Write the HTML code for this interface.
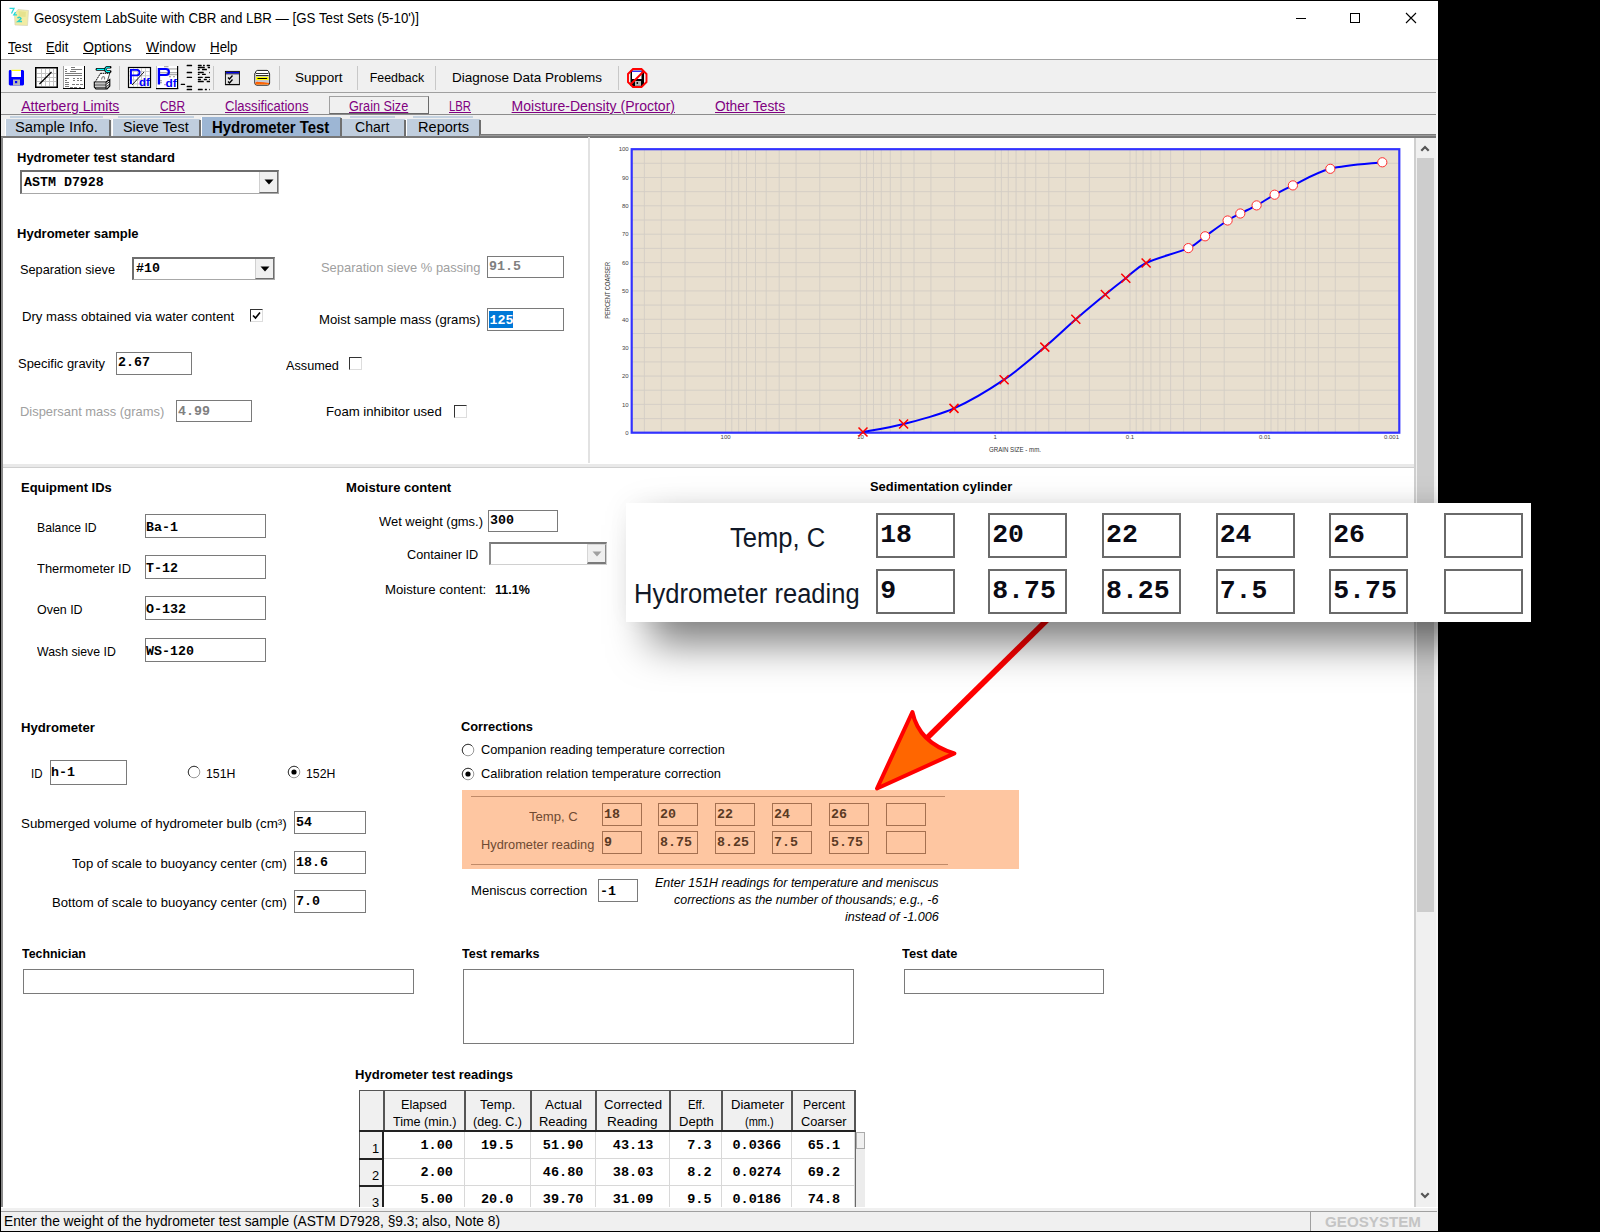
<!DOCTYPE html><html><head><meta charset="utf-8"><style>
html,body{margin:0;padding:0;}
body{width:1600px;height:1232px;background:#000;position:relative;overflow:hidden;font-family:"Liberation Sans", sans-serif;color:#000;}
.t{position:absolute;white-space:nowrap;}
.r{position:absolute;}
</style></head><body>
<div class="r" style="left:1px;top:1px;width:1437px;height:1231px;background:#fff;"></div>
<svg class="r" style="left:0;top:0" width="34" height="34" viewBox="0 0 34 34">
<path d="M18 9.5 L28.5 10.5 L27.5 25.5 L15 25 L14.5 14 Z" fill="#f1eca4" stroke="#d6d2b8" stroke-width="0.7"/>
<path d="M18.5 11 L26 12 L25.5 17 L19 16.5 Z" fill="#e0dc80" opacity="0.6"/>
<path d="M9.5 8.3 H14 L11.5 13.5" fill="none" stroke="#30d8d8" stroke-width="1.3"/>
<path d="M15.5 12 L13.8 14.8 H17" fill="none" stroke="#20dada" stroke-width="1.3"/>
<path d="M17.5 18 Q20 16.5 21 18.5 Q20 20 18 21.5 H22" fill="none" stroke="#30d0c8" stroke-width="1.5"/>
</svg>
<div class="t" style="left:33.75px;top:10.95px;font-size:14px;line-height:14px;transform-origin:0 11.85px;transform:scale(0.9494,1.0000);">Geosystem LabSuite with CBR and LBR — [GS Test Sets (5-10')]</div>
<div class="r" style="left:1296px;top:18px;width:10px;height:1px;background:#000;"></div>
<div class="r" style="left:1350px;top:13px;width:10px;height:10px;border:1px solid #000;box-sizing:border-box;"></div>
<svg class="r" style="left:1405px;top:12px" width="12" height="12" viewBox="0 0 12 12"><path d="M1 1 L11 11 M11 1 L1 11" stroke="#000" stroke-width="1.1"/></svg>
<div class="t" style="left:8.10px;top:40.82px;font-size:13.8px;line-height:13.8px;transform-origin:0 11.68px;transform:scale(0.9399,1.0000);"><u>T</u>est</div>
<div class="t" style="left:46.25px;top:40.82px;font-size:13.8px;line-height:13.8px;transform-origin:0 11.68px;transform:scale(0.9347,1.0000);"><u>E</u>dit</div>
<div class="t" style="left:83.10px;top:40.82px;font-size:13.8px;line-height:13.8px;transform-origin:0 11.68px;transform:scale(1.0181,1.0000);"><u>O</u>ptions</div>
<div class="t" style="left:146.00px;top:40.82px;font-size:13.8px;line-height:13.8px;transform-origin:0 11.68px;transform:scale(1.0096,1.0000);"><u>W</u>indow</div>
<div class="t" style="left:210.00px;top:40.82px;font-size:13.8px;line-height:13.8px;transform-origin:0 11.68px;transform:scale(0.9697,1.0000);"><u>H</u>elp</div>
<div class="r" style="left:1px;top:59px;width:1437px;height:1px;background:#a0a0a0;"></div>
<div class="r" style="left:1px;top:60px;width:1437px;height:32px;background:#f0f0f0;"></div>
<div class="r" style="left:1px;top:92px;width:1437px;height:1px;background:#a0a0a0;"></div>
<div class="r" style="left:1px;top:93px;width:1437px;height:21px;background:#f0f0f0;"></div>
<div class="r" style="left:1px;top:114px;width:1437px;height:1px;background:#8c8c8c;"></div>
<div class="r" style="left:1px;top:115px;width:1437px;height:22px;background:#f0f0f0;"></div>
<div class="r" style="left:119px;top:66px;width:1px;height:24px;background:#c8c8c8;"></div>
<div class="r" style="left:213px;top:66px;width:1px;height:24px;background:#c8c8c8;"></div>
<div class="r" style="left:279px;top:66px;width:1px;height:24px;background:#c8c8c8;"></div>
<div class="r" style="left:357px;top:66px;width:1px;height:24px;background:#c8c8c8;"></div>
<div class="r" style="left:435px;top:66px;width:1px;height:24px;background:#c8c8c8;"></div>
<div class="r" style="left:618px;top:66px;width:1px;height:24px;background:#c8c8c8;"></div>
<div class="t" style="left:295.30px;top:72.30px;font-size:12.4px;line-height:12.4px;transform-origin:0 10.50px;transform:scale(1.0929,1.0000);">Support</div>
<div class="t" style="left:369.70px;top:72.30px;font-size:12.4px;line-height:12.4px;">Feedback</div>
<div class="t" style="left:451.60px;top:72.30px;font-size:12.4px;line-height:12.4px;transform-origin:0 10.50px;transform:scale(1.0883,1.0000);">Diagnose Data Problems</div>
<div class="t" style="left:21.25px;top:99.05px;font-size:14px;line-height:14px;color:#800080;text-decoration:underline;">Atterberg Limits</div>
<div class="t" style="left:160.00px;top:99.05px;font-size:14px;line-height:14px;color:#800080;transform-origin:0 11.85px;transform:scale(0.8463,1.0000);text-decoration:underline;">CBR</div>
<div class="t" style="left:225.00px;top:99.05px;font-size:14px;line-height:14px;color:#800080;transform-origin:0 11.85px;transform:scale(0.9323,1.0000);text-decoration:underline;">Classifications</div>
<div class="t" style="left:348.75px;top:99.05px;font-size:14px;line-height:14px;color:#800080;transform-origin:0 11.85px;transform:scale(0.9062,1.0000);text-decoration:underline;">Grain Size</div>
<div class="t" style="left:449.00px;top:99.05px;font-size:14px;line-height:14px;color:#800080;transform-origin:0 11.85px;transform:scale(0.8079,1.0000);text-decoration:underline;">LBR</div>
<div class="t" style="left:511.60px;top:99.05px;font-size:14px;line-height:14px;color:#800080;text-decoration:underline;">Moisture-Density (Proctor)</div>
<div class="t" style="left:715.00px;top:99.05px;font-size:14px;line-height:14px;color:#800080;transform-origin:0 11.85px;transform:scale(0.9814,1.0000);text-decoration:underline;">Other Tests</div>
<div class="r" style="left:329px;top:96px;width:100px;height:18px;border:1px solid #a0a0a0;border-right-color:#6a6a6a;border-bottom-color:#6a6a6a;box-sizing:border-box;"></div>
<div class="r" style="left:10px;top:116px;width:93px;height:2px;background:#c4d2e0;"></div>
<div class="r" style="left:118px;top:116px;width:76px;height:2px;background:#c4d2e0;"></div>
<div class="r" style="left:350px;top:116px;width:45px;height:2px;background:#c4d2e0;"></div>
<div class="r" style="left:413px;top:116px;width:60px;height:2px;background:#c4d2e0;"></div>
<div class="r" style="left:5px;top:119px;width:105px;height:17px;background:#c0cede;border-left:1px solid #fff;box-sizing:border-box;"></div>
<div class="r" style="left:109px;top:120px;width:2px;height:16px;background:#6f6f6f;"></div>
<div class="t" style="left:15.00px;top:118.78px;font-size:15.5px;line-height:15.5px;transform-origin:0 13.12px;transform:scale(0.9514,1.0000);">Sample Info.</div>
<div class="r" style="left:112px;top:119px;width:88px;height:17px;background:#c0cede;border-left:1px solid #fff;box-sizing:border-box;"></div>
<div class="r" style="left:199px;top:120px;width:2px;height:16px;background:#6f6f6f;"></div>
<div class="t" style="left:122.80px;top:118.78px;font-size:15.5px;line-height:15.5px;transform-origin:0 13.12px;transform:scale(0.9211,1.0000);">Sieve Test</div>
<div class="r" style="left:341px;top:119px;width:64px;height:17px;background:#c0cede;border-left:1px solid #fff;box-sizing:border-box;"></div>
<div class="r" style="left:404px;top:120px;width:2px;height:16px;background:#6f6f6f;"></div>
<div class="t" style="left:354.70px;top:118.78px;font-size:15.5px;line-height:15.5px;transform-origin:0 13.12px;transform:scale(0.9051,1.0000);">Chart</div>
<div class="r" style="left:406px;top:119px;width:74px;height:17px;background:#c0cede;border-left:1px solid #fff;box-sizing:border-box;"></div>
<div class="r" style="left:479px;top:120px;width:2px;height:16px;background:#6f6f6f;"></div>
<div class="t" style="left:417.80px;top:118.78px;font-size:15.5px;line-height:15.5px;transform-origin:0 13.12px;transform:scale(0.9401,1.0000);">Reports</div>
<div class="r" style="left:200.6px;top:117px;width:140px;height:19px;background:#9db6d4;border-left:1px solid #fff;box-sizing:border-box;"></div>
<div class="r" style="left:340px;top:118px;width:2px;height:18px;background:#6f6f6f;"></div>
<div class="t" style="left:211.60px;top:119.83px;font-size:15.8px;line-height:15.8px;font-weight:700;transform-origin:0 13.37px;transform:scale(0.9435,1.0000);">Hydrometer Test</div>
<div class="r" style="left:480px;top:134px;width:956px;height:1px;background:#7a7a7a;"></div>
<div class="r" style="left:480px;top:135px;width:956px;height:1px;background:#9a9a9a;"></div>
<div class="r" style="left:1px;top:136px;width:1435px;height:2px;background:#777;"></div>
<div class="r" style="left:1px;top:137px;width:2px;height:1071px;background:#8a8a8a;"></div>
<div class="r" style="left:1416px;top:138px;width:21px;height:1069px;background:#f0f0f0;"></div>
<div class="r" style="left:1414px;top:138px;width:2px;height:1069px;background:#cfcfcf;"></div>
<div class="r" style="left:1436px;top:60px;width:2px;height:1150px;background:#f6f6f6;"></div>
<div class="r" style="left:1417px;top:158px;width:17px;height:754px;background:#cdcdcd;"></div>
<svg class="r" style="left:1417px;top:142px" width="16" height="12" viewBox="0 0 16 12"><path d="M4.3 8.8 L8 5 L11.7 8.8" fill="none" stroke="#555" stroke-width="2.2"/></svg>
<svg class="r" style="left:1417px;top:1190px" width="16" height="12" viewBox="0 0 16 12"><path d="M4.3 3.2 L8 7 L11.7 3.2" fill="none" stroke="#555" stroke-width="2.2"/></svg>
<div class="r" style="left:1px;top:1207px;width:1437px;height:25px;background:#f0f0f0;"></div>
<div class="r" style="left:1px;top:1207px;width:1437px;height:1px;background:#fff;"></div>
<div class="r" style="left:1px;top:1211px;width:1309px;height:1px;background:#a0a0a0;"></div>
<div class="r" style="left:1310px;top:1211px;width:127px;height:1px;background:#a0a0a0;"></div>
<div class="r" style="left:1310px;top:1211px;width:1px;height:21px;background:#a0a0a0;"></div>
<div class="t" style="left:3.60px;top:1213.75px;font-size:14px;line-height:14px;transform-origin:0 11.85px;transform:scale(0.9821,1.0000);">Enter the weight of the hydrometer test sample (ASTM D7928, §9.3; also, Note 8)</div>
<div class="t" style="left:1325.00px;top:1215.82px;font-size:13.8px;line-height:13.8px;font-weight:700;color:#c4c4c4;transform-origin:0 11.68px;transform:scale(1.0981,1.0000);">GEOSYSTEM</div>
<div class="r" style="left:0px;top:1231px;width:1438px;height:1px;background:#000;"></div>
<svg class="r" style="left:8px;top:69px" width="17" height="17" viewBox="0 0 17 17">
<path d="M1.5 1 H15 L16 2 V15.5 L15 16.5 H2 L0.8 15.5 V2 Z" fill="#0000ff"/>
<rect x="3.5" y="1" width="9.5" height="7" fill="#fff"/><rect x="3.5" y="0.8" width="9.5" height="1.2" fill="#ffff00"/>
<rect x="5" y="10.5" width="7" height="6" fill="#b8b8b8"/><rect x="7" y="12" width="2.2" height="2.2" fill="#0000ff"/>
</svg>
<svg class="r" style="left:35px;top:67px" width="23" height="21" viewBox="0 0 23 21">
<rect x="0" y="0" width="23" height="21" fill="#000"/><rect x="1.5" y="1.5" width="20" height="18" fill="#fff"/><rect x="6" y="2" width="1" height="17" fill="#c4c4c4"/><rect x="10" y="2" width="1" height="17" fill="#c4c4c4"/><rect x="14" y="2" width="1" height="17" fill="#c4c4c4"/><rect x="18" y="2" width="1" height="17" fill="#c4c4c4"/><rect x="2" y="6" width="19" height="1" fill="#c4c4c4"/><rect x="2" y="10" width="19" height="1" fill="#c4c4c4"/><rect x="2" y="14" width="19" height="1" fill="#c4c4c4"/>
<line x1="4.5" y1="17" x2="16.5" y2="5" stroke="#000" stroke-width="1.2"/></svg>
<svg class="r" style="left:63px;top:66px" width="22" height="23" viewBox="0 0 22 23">
<rect x="0" y="0" width="22" height="23" fill="#fff"/><rect x="21" y="0" width="1" height="23" fill="#000"/><rect x="0" y="22" width="22" height="1" fill="#000"/><rect x="0" y="0" width="1" height="22" fill="#a0a0a0"/><rect x="8" y="1" width="4" height="1" fill="#7a7a7a"/><rect x="2" y="3" width="2" height="1" fill="#7a7a7a"/><rect x="8" y="3" width="11" height="1" fill="#7a7a7a"/><rect x="2" y="5" width="2" height="1" fill="#7a7a7a"/><rect x="7" y="5" width="6" height="1" fill="#7a7a7a"/><rect x="2" y="7" width="17" height="1" fill="#7a7a7a"/><rect x="2" y="9" width="17" height="1" fill="#7a7a7a"/><rect x="2" y="12" width="4" height="1" fill="#7a7a7a"/><rect x="10" y="12" width="2" height="1" fill="#7a7a7a"/><rect x="14" y="12" width="2" height="1" fill="#7a7a7a"/><rect x="17" y="12" width="2" height="1" fill="#7a7a7a"/><rect x="2" y="14" width="2" height="1" fill="#7a7a7a"/><rect x="10" y="14" width="2" height="1" fill="#7a7a7a"/><rect x="14" y="14" width="2" height="1" fill="#7a7a7a"/><rect x="17" y="14" width="2" height="1" fill="#7a7a7a"/><rect x="2" y="16" width="4" height="1" fill="#7a7a7a"/><rect x="2" y="18" width="4" height="1" fill="#7a7a7a"/><rect x="9" y="18" width="3" height="1" fill="#7a7a7a"/><rect x="13" y="18" width="3" height="1" fill="#7a7a7a"/><rect x="17" y="18" width="3" height="1" fill="#7a7a7a"/><rect x="2" y="20" width="4" height="1" fill="#7a7a7a"/><rect x="7" y="21" width="3" height="1" fill="#7a7a7a"/><rect x="11" y="21" width="3" height="1" fill="#7a7a7a"/><rect x="16" y="21" width="2" height="1" fill="#7a7a7a"/></svg>
<svg class="r" style="left:0;top:0" width="120" height="95" viewBox="0 0 120 95">
<path d="M97 69.4 H105.5" stroke="#000" stroke-width="2.8" stroke-linecap="round"/><path d="M97.2 69.4 H105.5" stroke="#00ffff" stroke-width="1.1" stroke-linecap="round"/>
<path d="M110.2 67.2 H107.5 Q105.6 67.2 105.6 69.4 Q105.6 71.6 107.5 71.6 H110.2" fill="none" stroke="#000" stroke-width="2.6" stroke-linecap="round"/>
<path d="M110 67.2 H107.5 Q105.8 67.2 105.8 69.4 Q105.8 71.6 107.5 71.6 H110" fill="none" stroke="#00ffff" stroke-width="1.1"/>
<path d="M100.5 73.3 H109.8 L107.5 80.5 H95.5 Z" fill="#fff"/>
<path d="M100.5 73.3 H109.8 M100.5 73.3 L95.5 81.5 M109.8 73.3 L107.5 80.5" stroke="#000" stroke-width="1" stroke-dasharray="1.5 0.6"/>
<path d="M101.5 79.5 Q102 76.5 103.5 76.5 Q105 77 104.5 79.5" fill="none" stroke="#888" stroke-width="1.2"/>
<path d="M94.3 82 H106 L109.8 79.5 V86 L107 89 H96 L94.3 87 Z" fill="#fff" stroke="#000" stroke-width="1.1"/>
<rect x="95.3" y="82.8" width="10" height="1.5" fill="#c0c0c0"/><rect x="94.5" y="84.6" width="11.5" height="0.9" fill="#000"/>
<rect x="95.3" y="85.8" width="11" height="1.5" fill="#c8c8c8"/><rect x="95" y="87.4" width="11.5" height="0.9" fill="#000"/>
<path d="M106 82 V89 M106.5 84 L109.8 81.5 M106.5 86.5 L109.8 84" stroke="#000" stroke-width="0.9"/></svg>
<svg class="r" style="left:0;top:0" width="260" height="95" viewBox="0 0 260 95">
<rect x="128.5" y="67.5" width="22" height="20" fill="#fff" stroke="#000" stroke-width="1.2"/><rect x="133" y="68" width="0.9" height="19" fill="#c8c8c8"/><rect x="137" y="68" width="0.9" height="19" fill="#c8c8c8"/><rect x="141" y="68" width="0.9" height="19" fill="#c8c8c8"/><rect x="145" y="68" width="0.9" height="19" fill="#c8c8c8"/><rect x="129" y="71" width="21" height="0.9" fill="#c8c8c8"/><rect x="129" y="75.3" width="21" height="0.9" fill="#c8c8c8"/><rect x="129" y="79.5" width="21" height="0.9" fill="#c8c8c8"/><rect x="129" y="83.5" width="21" height="0.9" fill="#c8c8c8"/>
<line x1="132" y1="85" x2="144" y2="72" stroke="#000" stroke-width="0.9"/><path d="M130 69 H137 Q140.5 69 140.5 72.6 Q140.5 76.3 137 76.3 H131.9 V84 H130 Z M131.9 70.8 V74.5 H136.6 Q138.6 74.5 138.6 72.6 Q138.6 70.8 136.6 70.8 Z" fill="#0000ff" fill-rule="evenodd"/>
<text x="139" y="85.8" font-family="Liberation Sans" font-weight="700" font-size="11" textLength="10.8" lengthAdjust="spacingAndGlyphs" fill="#0000ff">df</text>
</svg>
<svg class="r" style="left:0;top:0" width="260" height="95" viewBox="0 0 260 95">
<rect x="156" y="66" width="22" height="23" fill="#fff"/><rect x="177" y="66" width="1.2" height="23" fill="#000"/><rect x="156" y="88" width="22.2" height="1.2" fill="#000"/><rect x="156" y="66" width="0.8" height="22" fill="#b0b0b0"/><rect x="164" y="66.3" width="4.5" height="0.9" fill="#8a8a8a"/><rect x="168" y="68.5" width="9" height="0.9" fill="#8a8a8a"/><rect x="160" y="72.3" width="17" height="0.9" fill="#8a8a8a"/><rect x="160" y="74.3" width="17" height="0.9" fill="#8a8a8a"/><rect x="169" y="76.3" width="2" height="0.9" fill="#8a8a8a"/><rect x="173" y="76.3" width="2" height="0.9" fill="#8a8a8a"/><rect x="160" y="80.3" width="2" height="0.9" fill="#8a8a8a"/><rect x="160" y="82.3" width="2" height="0.9" fill="#8a8a8a"/><rect x="164" y="84.3" width="2" height="0.9" fill="#8a8a8a"/><path d="M157.8 68 H166 Q170 68 170 72 Q170 76.1 166 76.1 H160.1 V84.6 H157.8 Z M160.1 70 V74.1 H165.6 Q167.8 74.1 167.8 72 Q167.8 70 165.6 70 Z" fill="#0000ff" fill-rule="evenodd"/>
<text x="165.5" y="86.8" font-family="Liberation Sans" font-weight="700" font-size="11" textLength="11.2" lengthAdjust="spacingAndGlyphs" fill="#0000ff">df</text>
</svg>
<svg class="r" style="left:176px;top:60px" width="40" height="32" viewBox="0 0 40 32"><rect x="10.65" y="4.75" width="5.45" height="1.4" rx="0.5" fill="#000"/><rect x="10.65" y="11.77" width="5.45" height="1.4" rx="0.5" fill="#000"/><rect x="10.65" y="16.70" width="5.45" height="1.4" rx="0.5" fill="#000"/><rect x="10.65" y="25.79" width="5.45" height="1.4" rx="0.5" fill="#000"/><rect x="10.65" y="28.78" width="5.45" height="1.4" rx="0.5" fill="#000"/><rect x="4.68" y="23.72" width="4.42" height="1.4" rx="0.5" fill="#000"/><rect x="21.82" y="4.75" width="3.90" height="1.4" rx="0.5" fill="#000"/><rect x="27.01" y="4.75" width="1.82" height="1.4" rx="0.5" fill="#000"/><rect x="30.65" y="4.75" width="3.38" height="1.4" rx="0.5" fill="#000"/><rect x="21.82" y="6.83" width="7.01" height="1.4" rx="0.5" fill="#000"/><rect x="31.69" y="6.83" width="2.34" height="1.4" rx="0.5" fill="#000"/><rect x="21.82" y="8.78" width="1.82" height="1.4" rx="0.5" fill="#000"/><rect x="25.97" y="8.78" width="4.94" height="1.4" rx="0.5" fill="#000"/><rect x="21.82" y="11.77" width="5.97" height="1.4" rx="0.5" fill="#000"/><rect x="32.99" y="11.77" width="0.78" height="1.4" rx="0.5" fill="#000"/><rect x="21.82" y="13.72" width="1.82" height="1.4" rx="0.5" fill="#000"/><rect x="25.97" y="13.72" width="3.90" height="1.4" rx="0.5" fill="#000"/><rect x="21.82" y="16.70" width="4.94" height="1.4" rx="0.5" fill="#000"/><rect x="28.83" y="16.70" width="5.19" height="1.4" rx="0.5" fill="#000"/><rect x="21.82" y="18.78" width="3.12" height="1.4" rx="0.5" fill="#000"/><rect x="27.79" y="18.78" width="3.12" height="1.4" rx="0.5" fill="#000"/><rect x="32.99" y="18.78" width="0.78" height="1.4" rx="0.5" fill="#000"/><rect x="21.82" y="20.81" width="5.97" height="1.4" rx="0.5" fill="#000"/><rect x="30.65" y="20.81" width="3.38" height="1.4" rx="0.5" fill="#000"/><rect x="21.82" y="28.78" width="4.94" height="1.4" rx="0.5" fill="#000"/><rect x="28.83" y="28.78" width="2.08" height="1.4" rx="0.5" fill="#000"/><rect x="32.99" y="28.78" width="0.78" height="1.4" rx="0.5" fill="#000"/></svg>
<svg class="r" style="left:0;top:0" width="280" height="95" viewBox="0 0 280 95">
<rect x="225.4" y="71.4" width="14" height="13" fill="#e4e4e4" stroke="#000" stroke-width="0.9"/><rect x="226" y="72" width="13" height="1.6" fill="#0000e0"/><rect x="225.4" y="73.6" width="14" height="0.7" fill="#000"/>
<path d="M228 77.5 L229.5 79 L232.5 75.5 M228 81.5 L229.5 83 L232.5 79.5" fill="none" stroke="#000" stroke-width="1.3"/>
<rect x="225" y="84.2" width="14.8" height="1" fill="#000"/></svg>
<svg class="r" style="left:0;top:0" width="280" height="95" viewBox="0 0 280 95">
<path d="M254.8 74 Q254.8 73 256 72 L256 71.3 Q256.5 70.4 257.5 70.4 H267 Q268 70.4 268.5 71.3 L268.5 72 Q269.6 73 269.6 74 V83 Q269.6 85.2 267.5 85.2 H257 Q254.8 85.2 254.8 83 Z" fill="#fff" stroke="#000" stroke-width="0.9"/>
<rect x="255.3" y="75.3" width="13.8" height="8" fill="#c8c8d0"/>
<rect x="256" y="73.2" width="12.5" height="0.8" fill="#000"/><rect x="256" y="75.2" width="12.5" height="0.8" fill="#000"/>
<rect x="256" y="76.8" width="12.5" height="3.2" fill="#ffff00"/><rect x="257.3" y="78" width="10" height="0.9" rx="0.4" fill="#000"/>
<path d="M255.3 82.5 Q257 81.2 258.5 82 Q262 81.8 269 83 V84.5 H255.3 Z" fill="#ff5a00"/>
<path d="M256 84 H268.5" stroke="#ffb000" stroke-width="0.6" stroke-dasharray="0.8 0.8"/></svg>
<svg class="r" style="left:0;top:0" width="660" height="95" viewBox="0 0 660 95">
<rect x="630.5" y="70.5" width="13.5" height="15.5" fill="#000"/><rect x="632" y="70.5" width="9.5" height="8.5" fill="#fff"/><rect x="632" y="70.8" width="9.5" height="1" fill="#0000ff"/>
<rect x="635" y="81" width="6" height="4.8" fill="#b8b8b8"/><circle cx="637.3" cy="83" r="0.9" fill="#000"/>
<path d="M633 69 H641.5 L646.5 74 V82 L641.5 87 H633 L628 82 V74 Z" fill="none" stroke="#ff0000" stroke-width="1.9"/>
<line x1="630.5" y1="84.5" x2="643.5" y2="71.5" stroke="#ff0000" stroke-width="1.9"/></svg>
<div class="t" style="left:16.50px;top:150.57px;font-size:13.5px;line-height:13.5px;font-weight:700;transform-origin:0 11.43px;transform:scale(0.9617,1.0000);">Hydrometer test standard</div>
<div class="r" style="left:20px;top:170px;width:259px;height:24px;border:1px solid #a8a8a8;border-top:2px solid #6e6e6e;border-left:2px solid #6e6e6e;box-sizing:border-box;background:#fff;"></div>
<div class="r" style="left:259px;top:172px;width:19px;height:21px;background:#f0f0f0;border-left:1px solid #d0d0d0;border-right:1px solid #6e6e6e;border-bottom:1px solid #6e6e6e;box-sizing:border-box;"></div>
<svg class="r" style="left:264.0px;top:179.0px" width="10" height="6" viewBox="0 0 10 6"><path d="M0.5 0.5 H9.5 L5 5.5 Z" fill="#000"/></svg>
<div class="t" style="left:24.00px;top:176.31px;font-size:13.3px;line-height:13.3px;font-weight:700;font-family:'Liberation Mono', monospace;">ASTM D7928</div>
<div class="t" style="left:16.50px;top:226.57px;font-size:13.5px;line-height:13.5px;font-weight:700;transform-origin:0 11.43px;transform:scale(0.9641,1.0000);">Hydrometer sample</div>
<div class="t" style="left:20.00px;top:262.57px;font-size:13.5px;line-height:13.5px;transform-origin:0 11.43px;transform:scale(0.9446,1.0000);">Separation sieve</div>
<div class="r" style="left:132px;top:257px;width:143px;height:23px;border:1px solid #a8a8a8;border-top:2px solid #6e6e6e;border-left:2px solid #6e6e6e;box-sizing:border-box;background:#fff;"></div>
<div class="r" style="left:255px;top:259px;width:19px;height:20px;background:#f0f0f0;border-left:1px solid #d0d0d0;border-right:1px solid #6e6e6e;border-bottom:1px solid #6e6e6e;box-sizing:border-box;"></div>
<svg class="r" style="left:260.0px;top:265.5px" width="10" height="6" viewBox="0 0 10 6"><path d="M0.5 0.5 H9.5 L5 5.5 Z" fill="#000"/></svg>
<div class="t" style="left:136.00px;top:261.81px;font-size:13.3px;line-height:13.3px;font-weight:700;font-family:'Liberation Mono', monospace;">#10</div>
<div class="t" style="left:320.60px;top:261.07px;font-size:13.5px;line-height:13.5px;color:#a0a0a0;transform-origin:0 11.43px;transform:scale(0.9568,1.0000);">Separation sieve % passing</div>
<div class="r" style="left:487px;top:256px;width:77px;height:22px;border:1px solid #7a7a7a;box-sizing:border-box;background:#fff;"></div>
<div class="t" style="left:489.00px;top:260.41px;font-size:13.3px;line-height:13.3px;font-weight:700;color:#808080;font-family:'Liberation Mono', monospace;">91.5</div>
<div class="t" style="left:22.10px;top:309.77px;font-size:13.5px;line-height:13.5px;transform-origin:0 11.43px;transform:scale(0.9718,1.0000);">Dry mass obtained via water content</div>
<div class="r" style="left:250px;top:309px;width:13px;height:13px;border:1px solid #333;border-right-color:#ddd;border-bottom-color:#ddd;box-sizing:border-box;background:#fff;"></div>
<svg class="r" style="left:250px;top:309px" width="13" height="13" viewBox="0 0 13 13"><path d="M3 6.5 L5.5 9 L10 3.5" fill="none" stroke="#000" stroke-width="1.6"/></svg>
<div class="t" style="left:318.70px;top:312.77px;font-size:13.5px;line-height:13.5px;transform-origin:0 11.43px;transform:scale(0.9730,1.0000);">Moist sample mass (grams)</div>
<div class="r" style="left:487px;top:308px;width:77px;height:23px;border:1px solid #7a7a7a;box-sizing:border-box;background:#fff;"></div>
<div class="r" style="left:489px;top:311px;width:24px;height:17px;background:#0078d7;"></div>
<div class="t" style="left:489.50px;top:314.31px;font-size:13.3px;line-height:13.3px;font-weight:700;color:#fff;font-family:'Liberation Mono', monospace;">125</div>
<div class="t" style="left:18.00px;top:356.57px;font-size:13.5px;line-height:13.5px;transform-origin:0 11.43px;transform:scale(0.9583,1.0000);">Specific gravity</div>
<div class="r" style="left:116px;top:352px;width:76px;height:23px;border:1px solid #7a7a7a;box-sizing:border-box;background:#fff;"></div>
<div class="t" style="left:118.00px;top:355.81px;font-size:13.3px;line-height:13.3px;font-weight:700;font-family:'Liberation Mono', monospace;">2.67</div>
<div class="t" style="left:285.70px;top:358.57px;font-size:13.5px;line-height:13.5px;transform-origin:0 11.43px;transform:scale(0.9397,1.0000);">Assumed</div>
<div class="r" style="left:349px;top:357px;width:13px;height:13px;border:1px solid #333;border-right-color:#ddd;border-bottom-color:#ddd;box-sizing:border-box;background:#fff;"></div>
<div class="t" style="left:19.90px;top:405.37px;font-size:13.5px;line-height:13.5px;color:#a0a0a0;transform-origin:0 11.43px;transform:scale(0.9569,1.0000);">Dispersant mass (grams)</div>
<div class="r" style="left:176px;top:400px;width:76px;height:22px;border:1px solid #7a7a7a;box-sizing:border-box;background:#fff;"></div>
<div class="t" style="left:178.00px;top:404.81px;font-size:13.3px;line-height:13.3px;font-weight:700;color:#808080;font-family:'Liberation Mono', monospace;">4.99</div>
<div class="t" style="left:325.50px;top:405.37px;font-size:13.5px;line-height:13.5px;transform-origin:0 11.43px;transform:scale(0.9764,1.0000);">Foam inhibitor used</div>
<div class="r" style="left:454px;top:405px;width:13px;height:13px;border:1px solid #333;border-right-color:#ddd;border-bottom-color:#ddd;box-sizing:border-box;background:#fff;"></div>
<div class="r" style="left:588px;top:137px;width:2px;height:326px;background:#e2e2e2;"></div>
<div class="r" style="left:3px;top:464px;width:1411px;height:4px;background:#e9e9e9;"></div>
<div class="r" style="left:3px;top:467px;width:1411px;height:1px;background:#cfcfcf;"></div>
<svg class="r" style="left:0;top:0" width="1600" height="470" viewBox="0 0 1600 470"><rect x="631.7" y="149.2" width="767.5999999999999" height="283.5" fill="#e8dfcf"/><line x1="631.7" y1="418.6" x2="1399.3" y2="418.6" stroke="#d2cdc5" stroke-width="0.9"/><line x1="631.7" y1="404.4" x2="1399.3" y2="404.4" stroke="#d2cdc5" stroke-width="0.9"/><line x1="631.7" y1="390.2" x2="1399.3" y2="390.2" stroke="#d2cdc5" stroke-width="0.9"/><line x1="631.7" y1="376.1" x2="1399.3" y2="376.1" stroke="#d2cdc5" stroke-width="0.9"/><line x1="631.7" y1="361.9" x2="1399.3" y2="361.9" stroke="#d2cdc5" stroke-width="0.9"/><line x1="631.7" y1="347.7" x2="1399.3" y2="347.7" stroke="#d2cdc5" stroke-width="0.9"/><line x1="631.7" y1="333.5" x2="1399.3" y2="333.5" stroke="#d2cdc5" stroke-width="0.9"/><line x1="631.7" y1="319.3" x2="1399.3" y2="319.3" stroke="#d2cdc5" stroke-width="0.9"/><line x1="631.7" y1="305.1" x2="1399.3" y2="305.1" stroke="#d2cdc5" stroke-width="0.9"/><line x1="631.7" y1="290.9" x2="1399.3" y2="290.9" stroke="#d2cdc5" stroke-width="0.9"/><line x1="631.7" y1="276.8" x2="1399.3" y2="276.8" stroke="#d2cdc5" stroke-width="0.9"/><line x1="631.7" y1="262.6" x2="1399.3" y2="262.6" stroke="#d2cdc5" stroke-width="0.9"/><line x1="631.7" y1="248.4" x2="1399.3" y2="248.4" stroke="#d2cdc5" stroke-width="0.9"/><line x1="631.7" y1="234.2" x2="1399.3" y2="234.2" stroke="#d2cdc5" stroke-width="0.9"/><line x1="631.7" y1="220.0" x2="1399.3" y2="220.0" stroke="#d2cdc5" stroke-width="0.9"/><line x1="631.7" y1="205.8" x2="1399.3" y2="205.8" stroke="#d2cdc5" stroke-width="0.9"/><line x1="631.7" y1="191.7" x2="1399.3" y2="191.7" stroke="#d2cdc5" stroke-width="0.9"/><line x1="631.7" y1="177.5" x2="1399.3" y2="177.5" stroke="#d2cdc5" stroke-width="0.9"/><line x1="631.7" y1="163.3" x2="1399.3" y2="163.3" stroke="#d2cdc5" stroke-width="0.9"/><line x1="1359.0" y1="149.2" x2="1359.0" y2="432.7" stroke="#d2cdc5" stroke-width="0.9"/><line x1="1335.3" y1="149.2" x2="1335.3" y2="432.7" stroke="#d2cdc5" stroke-width="0.9"/><line x1="1318.4" y1="149.2" x2="1318.4" y2="432.7" stroke="#d2cdc5" stroke-width="0.9"/><line x1="1305.4" y1="149.2" x2="1305.4" y2="432.7" stroke="#d2cdc5" stroke-width="0.9"/><line x1="1294.7" y1="149.2" x2="1294.7" y2="432.7" stroke="#d2cdc5" stroke-width="0.9"/><line x1="1285.7" y1="149.2" x2="1285.7" y2="432.7" stroke="#d2cdc5" stroke-width="0.9"/><line x1="1277.9" y1="149.2" x2="1277.9" y2="432.7" stroke="#d2cdc5" stroke-width="0.9"/><line x1="1271.0" y1="149.2" x2="1271.0" y2="432.7" stroke="#d2cdc5" stroke-width="0.9"/><line x1="1264.8" y1="149.2" x2="1264.8" y2="432.7" stroke="#d2cdc5" stroke-width="0.9"/><line x1="1224.2" y1="149.2" x2="1224.2" y2="432.7" stroke="#d2cdc5" stroke-width="0.9"/><line x1="1200.5" y1="149.2" x2="1200.5" y2="432.7" stroke="#d2cdc5" stroke-width="0.9"/><line x1="1183.6" y1="149.2" x2="1183.6" y2="432.7" stroke="#d2cdc5" stroke-width="0.9"/><line x1="1170.6" y1="149.2" x2="1170.6" y2="432.7" stroke="#d2cdc5" stroke-width="0.9"/><line x1="1159.9" y1="149.2" x2="1159.9" y2="432.7" stroke="#d2cdc5" stroke-width="0.9"/><line x1="1150.9" y1="149.2" x2="1150.9" y2="432.7" stroke="#d2cdc5" stroke-width="0.9"/><line x1="1143.1" y1="149.2" x2="1143.1" y2="432.7" stroke="#d2cdc5" stroke-width="0.9"/><line x1="1136.2" y1="149.2" x2="1136.2" y2="432.7" stroke="#d2cdc5" stroke-width="0.9"/><line x1="1130.0" y1="149.2" x2="1130.0" y2="432.7" stroke="#d2cdc5" stroke-width="0.9"/><line x1="1089.4" y1="149.2" x2="1089.4" y2="432.7" stroke="#d2cdc5" stroke-width="0.9"/><line x1="1065.7" y1="149.2" x2="1065.7" y2="432.7" stroke="#d2cdc5" stroke-width="0.9"/><line x1="1048.8" y1="149.2" x2="1048.8" y2="432.7" stroke="#d2cdc5" stroke-width="0.9"/><line x1="1035.8" y1="149.2" x2="1035.8" y2="432.7" stroke="#d2cdc5" stroke-width="0.9"/><line x1="1025.1" y1="149.2" x2="1025.1" y2="432.7" stroke="#d2cdc5" stroke-width="0.9"/><line x1="1016.1" y1="149.2" x2="1016.1" y2="432.7" stroke="#d2cdc5" stroke-width="0.9"/><line x1="1008.3" y1="149.2" x2="1008.3" y2="432.7" stroke="#d2cdc5" stroke-width="0.9"/><line x1="1001.4" y1="149.2" x2="1001.4" y2="432.7" stroke="#d2cdc5" stroke-width="0.9"/><line x1="995.2" y1="149.2" x2="995.2" y2="432.7" stroke="#d2cdc5" stroke-width="0.9"/><line x1="954.6" y1="149.2" x2="954.6" y2="432.7" stroke="#d2cdc5" stroke-width="0.9"/><line x1="930.9" y1="149.2" x2="930.9" y2="432.7" stroke="#d2cdc5" stroke-width="0.9"/><line x1="914.0" y1="149.2" x2="914.0" y2="432.7" stroke="#d2cdc5" stroke-width="0.9"/><line x1="901.0" y1="149.2" x2="901.0" y2="432.7" stroke="#d2cdc5" stroke-width="0.9"/><line x1="890.3" y1="149.2" x2="890.3" y2="432.7" stroke="#d2cdc5" stroke-width="0.9"/><line x1="881.3" y1="149.2" x2="881.3" y2="432.7" stroke="#d2cdc5" stroke-width="0.9"/><line x1="873.5" y1="149.2" x2="873.5" y2="432.7" stroke="#d2cdc5" stroke-width="0.9"/><line x1="866.6" y1="149.2" x2="866.6" y2="432.7" stroke="#d2cdc5" stroke-width="0.9"/><line x1="860.4" y1="149.2" x2="860.4" y2="432.7" stroke="#d2cdc5" stroke-width="0.9"/><line x1="819.8" y1="149.2" x2="819.8" y2="432.7" stroke="#d2cdc5" stroke-width="0.9"/><line x1="796.1" y1="149.2" x2="796.1" y2="432.7" stroke="#d2cdc5" stroke-width="0.9"/><line x1="779.2" y1="149.2" x2="779.2" y2="432.7" stroke="#d2cdc5" stroke-width="0.9"/><line x1="766.2" y1="149.2" x2="766.2" y2="432.7" stroke="#d2cdc5" stroke-width="0.9"/><line x1="755.5" y1="149.2" x2="755.5" y2="432.7" stroke="#d2cdc5" stroke-width="0.9"/><line x1="746.5" y1="149.2" x2="746.5" y2="432.7" stroke="#d2cdc5" stroke-width="0.9"/><line x1="738.7" y1="149.2" x2="738.7" y2="432.7" stroke="#d2cdc5" stroke-width="0.9"/><line x1="731.8" y1="149.2" x2="731.8" y2="432.7" stroke="#d2cdc5" stroke-width="0.9"/><line x1="725.6" y1="149.2" x2="725.6" y2="432.7" stroke="#d2cdc5" stroke-width="0.9"/><line x1="685.0" y1="149.2" x2="685.0" y2="432.7" stroke="#d2cdc5" stroke-width="0.9"/><line x1="661.3" y1="149.2" x2="661.3" y2="432.7" stroke="#d2cdc5" stroke-width="0.9"/><line x1="644.4" y1="149.2" x2="644.4" y2="432.7" stroke="#d2cdc5" stroke-width="0.9"/><rect x="631.7" y="149.2" width="767.5999999999999" height="283.5" fill="none" stroke="#3232ff" stroke-width="2.2"/><text x="628.7" y="435.0" font-size="6" text-anchor="end" fill="#444" font-family="Liberation Sans">0</text><text x="628.7" y="406.6" font-size="6" text-anchor="end" fill="#444" font-family="Liberation Sans">10</text><text x="628.7" y="378.3" font-size="6" text-anchor="end" fill="#444" font-family="Liberation Sans">20</text><text x="628.7" y="349.9" font-size="6" text-anchor="end" fill="#444" font-family="Liberation Sans">30</text><text x="628.7" y="321.5" font-size="6" text-anchor="end" fill="#444" font-family="Liberation Sans">40</text><text x="628.7" y="293.1" font-size="6" text-anchor="end" fill="#444" font-family="Liberation Sans">50</text><text x="628.7" y="264.8" font-size="6" text-anchor="end" fill="#444" font-family="Liberation Sans">60</text><text x="628.7" y="236.4" font-size="6" text-anchor="end" fill="#444" font-family="Liberation Sans">70</text><text x="628.7" y="208.0" font-size="6" text-anchor="end" fill="#444" font-family="Liberation Sans">80</text><text x="628.7" y="179.7" font-size="6" text-anchor="end" fill="#444" font-family="Liberation Sans">90</text><text x="628.7" y="151.3" font-size="6" text-anchor="end" fill="#444" font-family="Liberation Sans">100</text><text x="725.6" y="438.6" font-size="6" text-anchor="middle" fill="#444" font-family="Liberation Sans">100</text><text x="860.4" y="438.6" font-size="6" text-anchor="middle" fill="#444" font-family="Liberation Sans">10</text><text x="995.2" y="438.6" font-size="6" text-anchor="middle" fill="#444" font-family="Liberation Sans">1</text><text x="1130.0" y="438.6" font-size="6" text-anchor="middle" fill="#444" font-family="Liberation Sans">0.1</text><text x="1264.8" y="438.6" font-size="6" text-anchor="middle" fill="#444" font-family="Liberation Sans">0.01</text><text x="1399.0" y="438.6" font-size="6" text-anchor="end" fill="#444" font-family="Liberation Sans">0.001</text><text x="989" y="451.8" font-size="7.2" textLength="52" lengthAdjust="spacingAndGlyphs" fill="#333" font-family="Liberation Sans">GRAIN SIZE - mm.</text><text transform="translate(609.5,318.8) rotate(-90)" font-size="7.4" textLength="56.8" lengthAdjust="spacingAndGlyphs" fill="#333" font-family="Liberation Sans">PERCENT COARSER</text><path d="M863,432 C869.8,430.7 888.4,427.9 903.6,424 C918.8,420.1 937.2,415.8 954,408.4 C970.8,401.0 989.0,389.9 1004.1,379.7 C1019.2,369.5 1032.8,357.2 1044.8,347.1 C1056.8,337.0 1065.7,328.1 1075.8,319.3 C1085.9,310.5 1097.0,301.4 1105.3,294.5 C1113.6,287.6 1119.0,283.4 1125.8,278.2 C1132.6,272.9 1135.7,268.0 1146.1,263 C1156.5,258.0 1178.5,252.5 1188.3,248.1 C1198.1,243.7 1198.5,240.9 1205.1,236.3 C1211.6,231.7 1221.7,224.3 1227.6,220.5 C1233.5,216.7 1235.5,216.0 1240.3,213.5 C1245.1,211.0 1250.9,208.5 1256.6,205.4 C1262.3,202.3 1268.5,198.0 1274.6,194.7 C1280.6,191.4 1283.6,189.7 1292.9,185.4 C1302.2,181.1 1315.4,172.7 1330.3,168.8 C1345.2,165.0 1373.6,163.4 1382.3,162.3" fill="none" stroke="#0000ff" stroke-width="2"/><path d="M858.5,427.5 L867.5,436.5 M867.5,427.5 L858.5,436.5" stroke="#ff0000" stroke-width="1.5"/><path d="M899.1,419.5 L908.1,428.5 M908.1,419.5 L899.1,428.5" stroke="#ff0000" stroke-width="1.5"/><path d="M949.5,403.9 L958.5,412.9 M958.5,403.9 L949.5,412.9" stroke="#ff0000" stroke-width="1.5"/><path d="M999.6,375.2 L1008.6,384.2 M1008.6,375.2 L999.6,384.2" stroke="#ff0000" stroke-width="1.5"/><path d="M1040.3,342.6 L1049.3,351.6 M1049.3,342.6 L1040.3,351.6" stroke="#ff0000" stroke-width="1.5"/><path d="M1071.3,314.8 L1080.3,323.8 M1080.3,314.8 L1071.3,323.8" stroke="#ff0000" stroke-width="1.5"/><path d="M1100.8,290.0 L1109.8,299.0 M1109.8,290.0 L1100.8,299.0" stroke="#ff0000" stroke-width="1.5"/><path d="M1121.3,273.7 L1130.3,282.7 M1130.3,273.7 L1121.3,282.7" stroke="#ff0000" stroke-width="1.5"/><path d="M1141.6,258.5 L1150.6,267.5 M1150.6,258.5 L1141.6,267.5" stroke="#ff0000" stroke-width="1.5"/><circle cx="1188.3" cy="248.1" r="4.6" fill="#fff" stroke="#ff3030" stroke-width="1"/><circle cx="1205.1" cy="236.3" r="4.6" fill="#fff" stroke="#ff3030" stroke-width="1"/><circle cx="1227.6" cy="220.5" r="4.6" fill="#fff" stroke="#ff3030" stroke-width="1"/><circle cx="1240.3" cy="213.5" r="4.6" fill="#fff" stroke="#ff3030" stroke-width="1"/><circle cx="1256.6" cy="205.4" r="4.6" fill="#fff" stroke="#ff3030" stroke-width="1"/><circle cx="1274.6" cy="194.7" r="4.6" fill="#fff" stroke="#ff3030" stroke-width="1"/><circle cx="1292.9" cy="185.4" r="4.6" fill="#fff" stroke="#ff3030" stroke-width="1"/><circle cx="1330.3" cy="168.8" r="4.6" fill="#fff" stroke="#ff3030" stroke-width="1"/><circle cx="1382.3" cy="162.3" r="4.6" fill="#fff" stroke="#ff3030" stroke-width="1"/></svg>
<div class="t" style="left:21.20px;top:480.57px;font-size:13.5px;line-height:13.5px;font-weight:700;transform-origin:0 11.43px;transform:scale(0.9608,1.0000);">Equipment IDs</div>
<div class="t" style="left:37.20px;top:520.57px;font-size:13.5px;line-height:13.5px;transform-origin:0 11.43px;transform:scale(0.9028,1.0000);">Balance ID</div>
<div class="r" style="left:145px;top:514px;width:121px;height:24px;border:1px solid #7a7a7a;box-sizing:border-box;background:#fff;"></div>
<div class="t" style="left:146.00px;top:520.81px;font-size:13.3px;line-height:13.3px;font-weight:700;font-family:'Liberation Mono', monospace;">Ba-1</div>
<div class="t" style="left:37.20px;top:561.57px;font-size:13.5px;line-height:13.5px;transform-origin:0 11.43px;transform:scale(0.9565,1.0000);">Thermometer ID</div>
<div class="r" style="left:145px;top:555px;width:121px;height:24px;border:1px solid #7a7a7a;box-sizing:border-box;background:#fff;"></div>
<div class="t" style="left:146.00px;top:561.81px;font-size:13.3px;line-height:13.3px;font-weight:700;font-family:'Liberation Mono', monospace;">T-12</div>
<div class="t" style="left:37.20px;top:602.57px;font-size:13.5px;line-height:13.5px;transform-origin:0 11.43px;transform:scale(0.9204,1.0000);">Oven ID</div>
<div class="r" style="left:145px;top:596px;width:121px;height:24px;border:1px solid #7a7a7a;box-sizing:border-box;background:#fff;"></div>
<div class="t" style="left:146.00px;top:602.81px;font-size:13.3px;line-height:13.3px;font-weight:700;font-family:'Liberation Mono', monospace;">O-132</div>
<div class="t" style="left:37.20px;top:644.57px;font-size:13.5px;line-height:13.5px;transform-origin:0 11.43px;transform:scale(0.9106,1.0000);">Wash sieve ID</div>
<div class="r" style="left:145px;top:638px;width:121px;height:24px;border:1px solid #7a7a7a;box-sizing:border-box;background:#fff;"></div>
<div class="t" style="left:146.00px;top:644.81px;font-size:13.3px;line-height:13.3px;font-weight:700;font-family:'Liberation Mono', monospace;">WS-120</div>
<div class="t" style="left:346.00px;top:480.57px;font-size:13.5px;line-height:13.5px;font-weight:700;transform-origin:0 11.43px;transform:scale(0.9674,1.0000);">Moisture content</div>
<div class="t" style="left:378.80px;top:514.57px;font-size:13.5px;line-height:13.5px;transform-origin:0 11.43px;transform:scale(0.9582,1.0000);">Wet weight (gms.)</div>
<div class="r" style="left:488px;top:510px;width:70px;height:22px;border:1px solid #7a7a7a;box-sizing:border-box;background:#fff;"></div>
<div class="t" style="left:490.00px;top:513.81px;font-size:13.3px;line-height:13.3px;font-weight:700;font-family:'Liberation Mono', monospace;">300</div>
<div class="t" style="left:406.80px;top:547.57px;font-size:13.5px;line-height:13.5px;transform-origin:0 11.43px;transform:scale(0.9393,1.0000);">Container ID</div>
<div class="r" style="left:489px;top:542px;width:118px;height:23px;border:1px solid #d0d0d0;border-top:2px solid #7a7a7a;border-left:2px solid #8a8a8a;box-sizing:border-box;background:#fff;"></div>
<div class="r" style="left:587px;top:544px;width:19px;height:20px;background:#f0f0f0;border:1px solid #d6d6d6;border-bottom:2px solid #7a7a7a;border-right:1px solid #8a8a8a;box-sizing:border-box;"></div>
<svg class="r" style="left:592px;top:551px" width="10" height="6" viewBox="0 0 10 6"><path d="M0.5 0.5 H9.5 L5 5.5 Z" fill="#a0a0a0"/></svg>
<div class="t" style="left:384.80px;top:582.57px;font-size:13.5px;line-height:13.5px;transform-origin:0 11.43px;transform:scale(0.9774,1.0000);">Moisture content:</div>
<div class="t" style="left:495.20px;top:582.57px;font-size:13.5px;line-height:13.5px;font-weight:700;transform-origin:0 11.43px;transform:scale(0.9273,1.0000);">11.1%</div>
<div class="t" style="left:21.00px;top:721.07px;font-size:13.5px;line-height:13.5px;font-weight:700;transform-origin:0 11.43px;transform:scale(0.9749,1.0000);">Hydrometer</div>
<div class="t" style="left:30.80px;top:766.77px;font-size:13.5px;line-height:13.5px;transform-origin:0 11.43px;transform:scale(0.8519,1.0000);">ID</div>
<div class="r" style="left:50px;top:760px;width:77px;height:25px;border:1px solid #7a7a7a;box-sizing:border-box;background:#fff;"></div>
<div class="t" style="left:51.00px;top:766.31px;font-size:13.3px;line-height:13.3px;font-weight:700;font-family:'Liberation Mono', monospace;">h-1</div>
<svg class="r" style="left:186.5px;top:765.0px" width="14" height="14" viewBox="0 0 14 14"><circle cx="7" cy="7" r="5.8" fill="#fff" stroke="#9a9a9a" stroke-width="1"/><path d="M2.9 11.1 A5.8 5.8 0 0 1 11.1 2.9" fill="none" stroke="#404040" stroke-width="1"/></svg>
<div class="t" style="left:206.40px;top:766.77px;font-size:13.5px;line-height:13.5px;transform-origin:0 11.43px;transform:scale(0.9112,1.0000);">151H</div>
<svg class="r" style="left:286.5px;top:765.0px" width="14" height="14" viewBox="0 0 14 14"><circle cx="7" cy="7" r="5.8" fill="#fff" stroke="#9a9a9a" stroke-width="1"/><path d="M2.9 11.1 A5.8 5.8 0 0 1 11.1 2.9" fill="none" stroke="#404040" stroke-width="1"/><circle cx="7" cy="7" r="2.6" fill="#000"/></svg>
<div class="t" style="left:306.20px;top:766.77px;font-size:13.5px;line-height:13.5px;transform-origin:0 11.43px;transform:scale(0.9081,1.0000);">152H</div>
<div class="t" style="left:21.00px;top:816.57px;font-size:13.5px;line-height:13.5px;transform-origin:0 11.43px;transform:scale(0.9890,1.0000);">Submerged volume of hydrometer bulb (cm³)</div>
<div class="r" style="left:294px;top:811px;width:72px;height:23px;border:1px solid #7a7a7a;box-sizing:border-box;background:#fff;"></div>
<div class="t" style="left:296.00px;top:815.81px;font-size:13.3px;line-height:13.3px;font-weight:700;font-family:'Liberation Mono', monospace;">54</div>
<div class="t" style="left:71.90px;top:856.77px;font-size:13.5px;line-height:13.5px;transform-origin:0 11.43px;transform:scale(0.9738,1.0000);">Top of scale to buoyancy center (cm)</div>
<div class="r" style="left:294px;top:851px;width:72px;height:23px;border:1px solid #7a7a7a;box-sizing:border-box;background:#fff;"></div>
<div class="t" style="left:296.00px;top:856.31px;font-size:13.3px;line-height:13.3px;font-weight:700;font-family:'Liberation Mono', monospace;">18.6</div>
<div class="t" style="left:51.75px;top:895.57px;font-size:13.5px;line-height:13.5px;transform-origin:0 11.43px;transform:scale(0.9725,1.0000);">Bottom of scale to buoyancy center (cm)</div>
<div class="r" style="left:294px;top:890px;width:72px;height:23px;border:1px solid #7a7a7a;box-sizing:border-box;background:#fff;"></div>
<div class="t" style="left:296.00px;top:895.31px;font-size:13.3px;line-height:13.3px;font-weight:700;font-family:'Liberation Mono', monospace;">7.0</div>
<div class="t" style="left:870.30px;top:479.82px;font-size:13.5px;line-height:13.5px;font-weight:700;transform-origin:0 11.43px;transform:scale(0.9571,1.0000);">Sedimentation cylinder</div>
<div class="t" style="left:461.25px;top:720.07px;font-size:13.5px;line-height:13.5px;font-weight:700;transform-origin:0 11.43px;transform:scale(0.9500,1.0000);">Corrections</div>
<svg class="r" style="left:460.6px;top:742.5px" width="14" height="14" viewBox="0 0 14 14"><circle cx="7" cy="7" r="5.8" fill="#fff" stroke="#9a9a9a" stroke-width="1"/><path d="M2.9 11.1 A5.8 5.8 0 0 1 11.1 2.9" fill="none" stroke="#404040" stroke-width="1"/></svg>
<div class="t" style="left:480.75px;top:742.97px;font-size:13.5px;line-height:13.5px;transform-origin:0 11.43px;transform:scale(0.9471,1.0000);">Companion reading temperature correction</div>
<svg class="r" style="left:460.6px;top:766.5px" width="14" height="14" viewBox="0 0 14 14"><circle cx="7" cy="7" r="5.8" fill="#fff" stroke="#9a9a9a" stroke-width="1"/><path d="M2.9 11.1 A5.8 5.8 0 0 1 11.1 2.9" fill="none" stroke="#404040" stroke-width="1"/><circle cx="7" cy="7" r="2.6" fill="#000"/></svg>
<div class="t" style="left:480.75px;top:766.57px;font-size:13.5px;line-height:13.5px;transform-origin:0 11.43px;transform:scale(0.9518,1.0000);">Calibration relation temperature correction</div>
<div class="t" style="left:470.60px;top:883.57px;font-size:13.5px;line-height:13.5px;transform-origin:0 11.43px;transform:scale(0.9690,1.0000);">Meniscus correction</div>
<div class="r" style="left:598px;top:879px;width:40px;height:23px;border:1px solid #7a7a7a;box-sizing:border-box;background:#fff;"></div>
<div class="t" style="left:600.00px;top:885.31px;font-size:13.3px;line-height:13.3px;font-weight:700;font-family:'Liberation Mono', monospace;">-1</div>
<div class="t" style="left:655.00px;top:876.07px;font-size:13.5px;line-height:13.5px;font-style:italic;transform-origin:0 11.43px;transform:scale(0.9240,1.0000);">Enter 151H readings for temperature and meniscus</div>
<div class="t" style="left:674.20px;top:892.97px;font-size:13.5px;line-height:13.5px;font-style:italic;transform-origin:0 11.43px;transform:scale(0.9221,1.0000);">corrections as the number of thousands; e.g., -6</div>
<div class="t" style="left:844.80px;top:909.87px;font-size:13.5px;line-height:13.5px;font-style:italic;transform-origin:0 11.43px;transform:scale(0.9320,1.0000);">instead of -1.006</div>
<div class="t" style="left:21.60px;top:946.57px;font-size:13.5px;line-height:13.5px;font-weight:700;transform-origin:0 11.43px;transform:scale(0.9191,1.0000);">Technician</div>
<div class="r" style="left:23px;top:969px;width:391px;height:25px;border:1px solid #7a7a7a;box-sizing:border-box;"></div>
<div class="t" style="left:461.50px;top:946.57px;font-size:13.5px;line-height:13.5px;font-weight:700;transform-origin:0 11.43px;transform:scale(0.9335,1.0000);">Test remarks</div>
<div class="r" style="left:463px;top:969px;width:391px;height:75px;border:1px solid #7a7a7a;box-sizing:border-box;"></div>
<div class="t" style="left:902.20px;top:946.57px;font-size:13.5px;line-height:13.5px;font-weight:700;transform-origin:0 11.43px;transform:scale(0.9510,1.0000);">Test date</div>
<div class="r" style="left:904px;top:969px;width:200px;height:25px;border:1px solid #7a7a7a;box-sizing:border-box;"></div>
<div class="t" style="left:354.60px;top:1068.17px;font-size:13.5px;line-height:13.5px;font-weight:700;transform-origin:0 11.43px;transform:scale(0.9661,1.0000);">Hydrometer test readings</div>
<div class="r" style="left:0;top:0;width:1600px;height:1207px;overflow:hidden;">
<div class="r" style="left:359px;top:1090px;width:497px;height:120px;background:#fff;"></div>
<div class="r" style="left:359px;top:1090px;width:497px;height:42px;background:#f0f0f0;"></div>
<div class="r" style="left:359px;top:1132px;width:25px;height:80px;background:#f0f0f0;"></div>
<div class="r" style="left:359px;top:1090px;width:497px;height:1px;background:#555;"></div>
<div class="r" style="left:359px;top:1090px;width:1px;height:42px;background:#555;"></div>
<div class="r" style="left:383px;top:1090px;width:2px;height:42px;background:#555;"></div>
<div class="r" style="left:464px;top:1090px;width:2px;height:42px;background:#555;"></div>
<div class="r" style="left:530px;top:1090px;width:2px;height:42px;background:#555;"></div>
<div class="r" style="left:595px;top:1090px;width:2px;height:42px;background:#555;"></div>
<div class="r" style="left:669px;top:1090px;width:2px;height:42px;background:#555;"></div>
<div class="r" style="left:721px;top:1090px;width:2px;height:42px;background:#555;"></div>
<div class="r" style="left:791px;top:1090px;width:2px;height:42px;background:#555;"></div>
<div class="r" style="left:854px;top:1090px;width:2px;height:42px;background:#555;"></div>
<div class="r" style="left:359px;top:1130px;width:497px;height:2px;background:#222;"></div>
<div class="r" style="left:382px;top:1132px;width:2px;height:80px;background:#222;"></div>
<div class="r" style="left:359px;top:1132px;width:1px;height:80px;background:#555;"></div>
<div class="r" style="left:359px;top:1158px;width:25px;height:2px;background:#222;"></div>
<div class="r" style="left:384px;top:1158px;width:472px;height:1px;background:#d8d8d8;"></div>
<div class="r" style="left:359px;top:1185px;width:25px;height:2px;background:#222;"></div>
<div class="r" style="left:384px;top:1185px;width:472px;height:1px;background:#d8d8d8;"></div>
<div class="r" style="left:464px;top:1132px;width:1px;height:80px;background:#d8d8d8;"></div>
<div class="r" style="left:530px;top:1132px;width:1px;height:80px;background:#d8d8d8;"></div>
<div class="r" style="left:595px;top:1132px;width:1px;height:80px;background:#d8d8d8;"></div>
<div class="r" style="left:669px;top:1132px;width:1px;height:80px;background:#d8d8d8;"></div>
<div class="r" style="left:721px;top:1132px;width:1px;height:80px;background:#d8d8d8;"></div>
<div class="r" style="left:791px;top:1132px;width:1px;height:80px;background:#d8d8d8;"></div>
<div class="r" style="left:854px;top:1132px;width:1px;height:80px;background:#d8d8d8;"></div>
<div class="r" style="left:855px;top:1132px;width:1px;height:80px;background:#6a6a6a;"></div>
<div class="r" style="left:856px;top:1149px;width:9px;height:60px;background:#ececec;"></div>
<div class="t" style="left:401.40px;top:1098.17px;font-size:13.5px;line-height:13.5px;transform-origin:0 11.43px;transform:scale(0.9405,1.0000);">Elapsed</div>
<div class="t" style="left:393.00px;top:1115.07px;font-size:13.5px;line-height:13.5px;transform-origin:0 11.43px;transform:scale(0.9355,1.0000);">Time (min.)</div>
<div class="t" style="left:480.00px;top:1098.17px;font-size:13.5px;line-height:13.5px;transform-origin:0 11.43px;transform:scale(0.9650,1.0000);">Temp.</div>
<div class="t" style="left:473.30px;top:1115.07px;font-size:13.5px;line-height:13.5px;transform-origin:0 11.43px;transform:scale(0.9312,1.0000);">(deg. C.)</div>
<div class="t" style="left:544.90px;top:1098.17px;font-size:13.5px;line-height:13.5px;transform-origin:0 11.43px;transform:scale(0.9885,1.0000);">Actual</div>
<div class="t" style="left:539.10px;top:1115.07px;font-size:13.5px;line-height:13.5px;transform-origin:0 11.43px;transform:scale(0.9605,1.0000);">Reading</div>
<div class="t" style="left:604.30px;top:1098.17px;font-size:13.5px;line-height:13.5px;transform-origin:0 11.43px;transform:scale(0.9787,1.0000);">Corrected</div>
<div class="t" style="left:606.60px;top:1115.07px;font-size:13.5px;line-height:13.5px;transform-origin:0 11.43px;transform:scale(1.0062,1.0000);">Reading</div>
<div class="t" style="left:687.60px;top:1098.17px;font-size:13.5px;line-height:13.5px;transform-origin:0 11.43px;transform:scale(0.8458,1.0000);">Eff.</div>
<div class="t" style="left:679.20px;top:1115.07px;font-size:13.5px;line-height:13.5px;transform-origin:0 11.43px;transform:scale(0.9655,1.0000);">Depth</div>
<div class="t" style="left:730.80px;top:1098.17px;font-size:13.5px;line-height:13.5px;transform-origin:0 11.43px;transform:scale(0.9682,1.0000);">Diameter</div>
<div class="t" style="left:745.00px;top:1115.07px;font-size:13.5px;line-height:13.5px;transform-origin:0 11.43px;transform:scale(0.8145,1.0000);">(mm.)</div>
<div class="t" style="left:803.40px;top:1098.17px;font-size:13.5px;line-height:13.5px;transform-origin:0 11.43px;transform:scale(0.9074,1.0000);">Percent</div>
<div class="t" style="left:801.40px;top:1115.07px;font-size:13.5px;line-height:13.5px;transform-origin:0 11.43px;transform:scale(0.9481,1.0000);">Coarser</div>
<div class="t" style="left:420.50px;top:1139.05px;font-size:13.5px;line-height:13.5px;font-weight:700;font-family:'Liberation Mono', monospace;">1.00</div>
<div class="t" style="left:481.00px;top:1139.05px;font-size:13.5px;line-height:13.5px;font-weight:700;font-family:'Liberation Mono', monospace;">19.5</div>
<div class="t" style="left:542.85px;top:1139.05px;font-size:13.5px;line-height:13.5px;font-weight:700;font-family:'Liberation Mono', monospace;">51.90</div>
<div class="t" style="left:612.85px;top:1139.05px;font-size:13.5px;line-height:13.5px;font-weight:700;font-family:'Liberation Mono', monospace;">43.13</div>
<div class="t" style="left:687.25px;top:1139.05px;font-size:13.5px;line-height:13.5px;font-weight:700;font-family:'Liberation Mono', monospace;">7.3</div>
<div class="t" style="left:732.50px;top:1139.05px;font-size:13.5px;line-height:13.5px;font-weight:700;font-family:'Liberation Mono', monospace;">0.0366</div>
<div class="t" style="left:807.70px;top:1139.05px;font-size:13.5px;line-height:13.5px;font-weight:700;font-family:'Liberation Mono', monospace;">65.1</div>
<div class="t" style="left:372.00px;top:1143.08px;font-size:12.9px;line-height:12.9px;">1</div>
<div class="t" style="left:420.50px;top:1166.05px;font-size:13.5px;line-height:13.5px;font-weight:700;font-family:'Liberation Mono', monospace;">2.00</div>
<div class="t" style="left:542.85px;top:1166.05px;font-size:13.5px;line-height:13.5px;font-weight:700;font-family:'Liberation Mono', monospace;">46.80</div>
<div class="t" style="left:612.85px;top:1166.05px;font-size:13.5px;line-height:13.5px;font-weight:700;font-family:'Liberation Mono', monospace;">38.03</div>
<div class="t" style="left:687.25px;top:1166.05px;font-size:13.5px;line-height:13.5px;font-weight:700;font-family:'Liberation Mono', monospace;">8.2</div>
<div class="t" style="left:732.50px;top:1166.05px;font-size:13.5px;line-height:13.5px;font-weight:700;font-family:'Liberation Mono', monospace;">0.0274</div>
<div class="t" style="left:807.70px;top:1166.05px;font-size:13.5px;line-height:13.5px;font-weight:700;font-family:'Liberation Mono', monospace;">69.2</div>
<div class="t" style="left:372.00px;top:1170.08px;font-size:12.9px;line-height:12.9px;">2</div>
<div class="t" style="left:420.50px;top:1193.05px;font-size:13.5px;line-height:13.5px;font-weight:700;font-family:'Liberation Mono', monospace;">5.00</div>
<div class="t" style="left:481.00px;top:1193.05px;font-size:13.5px;line-height:13.5px;font-weight:700;font-family:'Liberation Mono', monospace;">20.0</div>
<div class="t" style="left:542.85px;top:1193.05px;font-size:13.5px;line-height:13.5px;font-weight:700;font-family:'Liberation Mono', monospace;">39.70</div>
<div class="t" style="left:612.85px;top:1193.05px;font-size:13.5px;line-height:13.5px;font-weight:700;font-family:'Liberation Mono', monospace;">31.09</div>
<div class="t" style="left:687.25px;top:1193.05px;font-size:13.5px;line-height:13.5px;font-weight:700;font-family:'Liberation Mono', monospace;">9.5</div>
<div class="t" style="left:732.50px;top:1193.05px;font-size:13.5px;line-height:13.5px;font-weight:700;font-family:'Liberation Mono', monospace;">0.0186</div>
<div class="t" style="left:807.70px;top:1193.05px;font-size:13.5px;line-height:13.5px;font-weight:700;font-family:'Liberation Mono', monospace;">74.8</div>
<div class="t" style="left:372.00px;top:1197.08px;font-size:12.9px;line-height:12.9px;">3</div>
</div>
<div class="r" style="left:856px;top:1132px;width:9px;height:17px;background:#f0f0f0;border:1px solid #aaa;box-sizing:border-box;"></div>
<div class="r" style="left:462px;top:790px;width:557px;height:79px;background:#fec6a1;"></div>
<div class="r" style="left:471px;top:796px;width:474px;height:1px;background:#c08a68;"></div>
<div class="r" style="left:471px;top:864px;width:477px;height:1px;background:#c08a68;"></div>
<div class="t" style="left:528.70px;top:809.57px;font-size:13.5px;line-height:13.5px;color:#6e4a32;transform-origin:0 11.43px;transform:scale(0.9704,1.0000);">Temp, C</div>
<div class="t" style="left:481.10px;top:837.57px;font-size:13.5px;line-height:13.5px;color:#6e4a32;transform-origin:0 11.43px;transform:scale(0.9494,1.0000);">Hydrometer reading</div>
<div class="r" style="left:602px;top:803px;width:40px;height:23px;border:1px solid #a47050;box-sizing:border-box;"></div>
<div class="r" style="left:602px;top:831px;width:40px;height:23px;border:1px solid #a47050;box-sizing:border-box;"></div>
<div class="t" style="left:604.00px;top:808.31px;font-size:13.3px;line-height:13.3px;font-weight:700;color:#5a3a24;font-family:'Liberation Mono', monospace;">18</div>
<div class="t" style="left:604.00px;top:835.81px;font-size:13.3px;line-height:13.3px;font-weight:700;color:#5a3a24;font-family:'Liberation Mono', monospace;">9</div>
<div class="r" style="left:658px;top:803px;width:40px;height:23px;border:1px solid #a47050;box-sizing:border-box;"></div>
<div class="r" style="left:658px;top:831px;width:40px;height:23px;border:1px solid #a47050;box-sizing:border-box;"></div>
<div class="t" style="left:660.00px;top:808.31px;font-size:13.3px;line-height:13.3px;font-weight:700;color:#5a3a24;font-family:'Liberation Mono', monospace;">20</div>
<div class="t" style="left:660.00px;top:835.81px;font-size:13.3px;line-height:13.3px;font-weight:700;color:#5a3a24;font-family:'Liberation Mono', monospace;">8.75</div>
<div class="r" style="left:715px;top:803px;width:40px;height:23px;border:1px solid #a47050;box-sizing:border-box;"></div>
<div class="r" style="left:715px;top:831px;width:40px;height:23px;border:1px solid #a47050;box-sizing:border-box;"></div>
<div class="t" style="left:717.00px;top:808.31px;font-size:13.3px;line-height:13.3px;font-weight:700;color:#5a3a24;font-family:'Liberation Mono', monospace;">22</div>
<div class="t" style="left:717.00px;top:835.81px;font-size:13.3px;line-height:13.3px;font-weight:700;color:#5a3a24;font-family:'Liberation Mono', monospace;">8.25</div>
<div class="r" style="left:772px;top:803px;width:40px;height:23px;border:1px solid #a47050;box-sizing:border-box;"></div>
<div class="r" style="left:772px;top:831px;width:40px;height:23px;border:1px solid #a47050;box-sizing:border-box;"></div>
<div class="t" style="left:774.00px;top:808.31px;font-size:13.3px;line-height:13.3px;font-weight:700;color:#5a3a24;font-family:'Liberation Mono', monospace;">24</div>
<div class="t" style="left:774.00px;top:835.81px;font-size:13.3px;line-height:13.3px;font-weight:700;color:#5a3a24;font-family:'Liberation Mono', monospace;">7.5</div>
<div class="r" style="left:829px;top:803px;width:40px;height:23px;border:1px solid #a47050;box-sizing:border-box;"></div>
<div class="r" style="left:829px;top:831px;width:40px;height:23px;border:1px solid #a47050;box-sizing:border-box;"></div>
<div class="t" style="left:831.00px;top:808.31px;font-size:13.3px;line-height:13.3px;font-weight:700;color:#5a3a24;font-family:'Liberation Mono', monospace;">26</div>
<div class="t" style="left:831.00px;top:835.81px;font-size:13.3px;line-height:13.3px;font-weight:700;color:#5a3a24;font-family:'Liberation Mono', monospace;">5.75</div>
<div class="r" style="left:886px;top:803px;width:40px;height:23px;border:1px solid #a47050;box-sizing:border-box;"></div>
<div class="r" style="left:886px;top:831px;width:40px;height:23px;border:1px solid #a47050;box-sizing:border-box;"></div>
<svg class="r" style="left:0;top:0;z-index:4" width="1600" height="900" viewBox="0 0 1600 900">
<line x1="1048" y1="619" x2="925" y2="740" stroke="#ff0000" stroke-width="5.6"/>
<path d="M877 788.5 L912.4 712 Q919 743 954.4 753.4 Z" fill="#ff6600" stroke="#ff0000" stroke-width="4" stroke-linejoin="round"/>
</svg>
<div class="r" style="left:626px;top:503px;width:905px;height:119px;background:#fff;box-shadow:24px 22px 40px rgba(0,0,0,0.5), 0 -2px 22px rgba(0,0,0,0.035);z-index:5;">
<div class="t" style="left:103.70px;top:21.64px;font-size:27px;line-height:27px;color:#111827;transform-origin:0 22.86px;transform:scale(0.9476,1.0000);">Temp, C</div>
<div class="t" style="left:7.75px;top:77.89px;font-size:27px;line-height:27px;color:#111827;transform-origin:0 22.86px;transform:scale(0.9454,1.0000);">Hydrometer reading</div>
<div class="r" style="left:250.2px;top:9.8px;width:79px;height:45px;border:2.5px solid #6a6a6a;box-sizing:border-box;"></div>
<div class="r" style="left:250.2px;top:65.8px;width:79px;height:45px;border:2.5px solid #6a6a6a;box-sizing:border-box;"></div>
<div class="t" style="left:254.20px;top:18.99px;font-size:26.5px;line-height:26.5px;font-weight:700;color:#0a0a14;font-family:'Liberation Mono', monospace;">18</div>
<div class="t" style="left:254.20px;top:74.69px;font-size:26.5px;line-height:26.5px;font-weight:700;color:#0a0a14;font-family:'Liberation Mono', monospace;">9</div>
<div class="r" style="left:362.2px;top:9.8px;width:79px;height:45px;border:2.5px solid #6a6a6a;box-sizing:border-box;"></div>
<div class="r" style="left:362.2px;top:65.8px;width:79px;height:45px;border:2.5px solid #6a6a6a;box-sizing:border-box;"></div>
<div class="t" style="left:366.20px;top:18.99px;font-size:26.5px;line-height:26.5px;font-weight:700;color:#0a0a14;font-family:'Liberation Mono', monospace;">20</div>
<div class="t" style="left:366.20px;top:74.69px;font-size:26.5px;line-height:26.5px;font-weight:700;color:#0a0a14;font-family:'Liberation Mono', monospace;">8.75</div>
<div class="r" style="left:476.0px;top:9.8px;width:79px;height:45px;border:2.5px solid #6a6a6a;box-sizing:border-box;"></div>
<div class="r" style="left:476.0px;top:65.8px;width:79px;height:45px;border:2.5px solid #6a6a6a;box-sizing:border-box;"></div>
<div class="t" style="left:480.00px;top:18.99px;font-size:26.5px;line-height:26.5px;font-weight:700;color:#0a0a14;font-family:'Liberation Mono', monospace;">22</div>
<div class="t" style="left:480.00px;top:74.69px;font-size:26.5px;line-height:26.5px;font-weight:700;color:#0a0a14;font-family:'Liberation Mono', monospace;">8.25</div>
<div class="r" style="left:589.7px;top:9.8px;width:79px;height:45px;border:2.5px solid #6a6a6a;box-sizing:border-box;"></div>
<div class="r" style="left:589.7px;top:65.8px;width:79px;height:45px;border:2.5px solid #6a6a6a;box-sizing:border-box;"></div>
<div class="t" style="left:593.70px;top:18.99px;font-size:26.5px;line-height:26.5px;font-weight:700;color:#0a0a14;font-family:'Liberation Mono', monospace;">24</div>
<div class="t" style="left:593.70px;top:74.69px;font-size:26.5px;line-height:26.5px;font-weight:700;color:#0a0a14;font-family:'Liberation Mono', monospace;">7.5</div>
<div class="r" style="left:703.2px;top:9.8px;width:79px;height:45px;border:2.5px solid #6a6a6a;box-sizing:border-box;"></div>
<div class="r" style="left:703.2px;top:65.8px;width:79px;height:45px;border:2.5px solid #6a6a6a;box-sizing:border-box;"></div>
<div class="t" style="left:707.20px;top:18.99px;font-size:26.5px;line-height:26.5px;font-weight:700;color:#0a0a14;font-family:'Liberation Mono', monospace;">26</div>
<div class="t" style="left:707.20px;top:74.69px;font-size:26.5px;line-height:26.5px;font-weight:700;color:#0a0a14;font-family:'Liberation Mono', monospace;">5.75</div>
<div class="r" style="left:817.7px;top:9.8px;width:79px;height:45px;border:2.5px solid #6a6a6a;box-sizing:border-box;"></div>
<div class="r" style="left:817.7px;top:65.8px;width:79px;height:45px;border:2.5px solid #6a6a6a;box-sizing:border-box;"></div>
</div>
</body></html>
